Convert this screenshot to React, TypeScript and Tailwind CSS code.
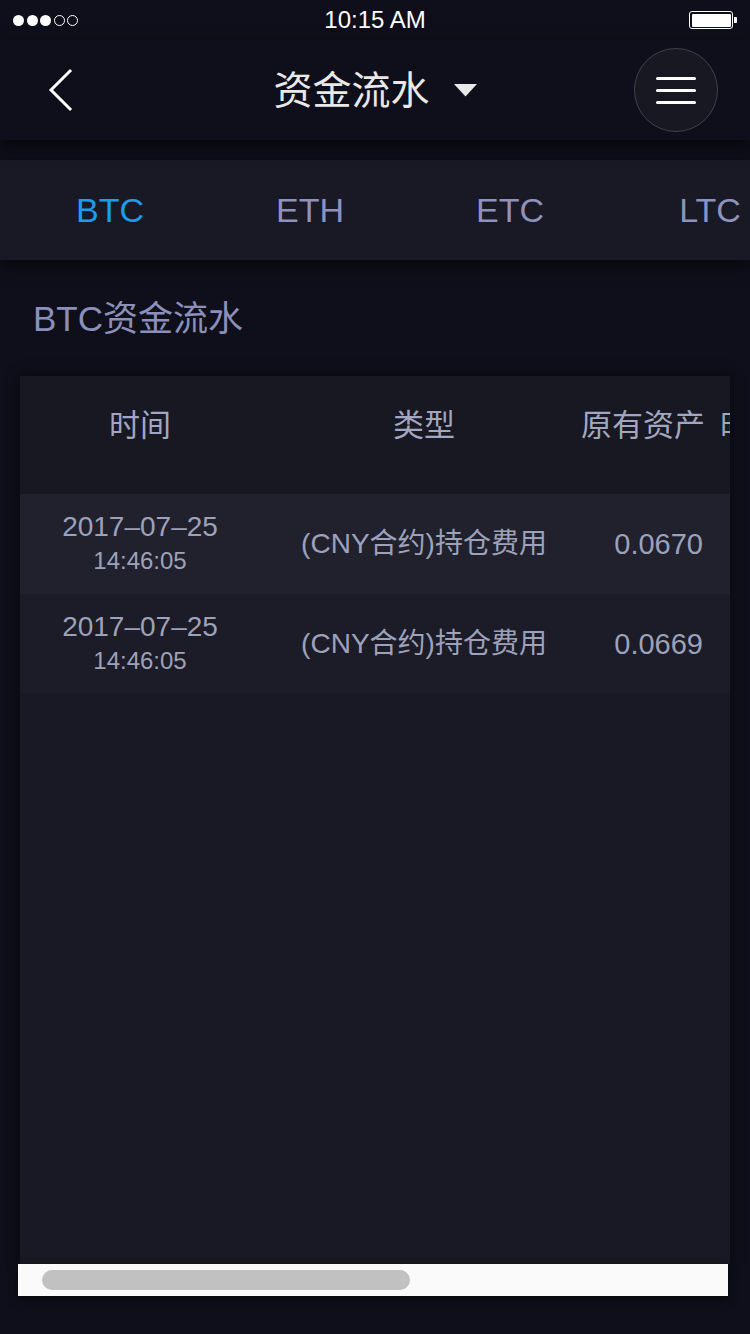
import React from "react";

const FONT = { fontFamily: '"Liberation Sans", "Noto Sans CJK SC", sans-serif' };

function StatusBar() {
  return (
    <div className="relative h-[40px] flex items-center px-[13px]">
      <div className="flex items-center gap-[2.5px]">
        {[0, 1, 2].map((i) => (
          <div key={i} className="w-[11px] h-[11px] rounded-full bg-white" />
        ))}
        {[0, 1].map((i) => (
          <div key={i} className="w-[11px] h-[11px] rounded-full border border-white" />
        ))}
      </div>
      <div className="absolute left-0 right-0 top-0 h-[40px] flex items-center justify-center text-white text-[24px] leading-none">
        10:15 AM
      </div>
      <div className="ml-auto flex items-center">
        <div className="w-[44px] h-[18px] rounded-[3px] border-[1.5px] border-white p-[1.5px]">
          <div className="w-full h-full bg-white rounded-[1px]" />
        </div>
        <div className="w-[3px] h-[6px] bg-white rounded-r-[1px] ml-[1px]" />
      </div>
    </div>
  );
}

function NavBar() {
  return (
    <div className="relative z-20 h-[100px] grid grid-cols-[1fr_auto_1fr] items-center bg-[#0e0f1a] shadow-[0_6px_14px_rgba(0,0,0,0.55)]">
      <div className="pl-[48px] flex items-center">
        <svg width="26" height="44" viewBox="0 0 26 44">
          <polyline points="22,3 3,22 22,41" fill="none" stroke="#ffffff" strokeWidth="3" strokeLinecap="square" />
        </svg>
      </div>
      <div className="flex items-center">
        <span className="text-[39px] leading-none text-[#e8e8e8]">资金流水</span>
        <svg className="ml-[24px]" width="23" height="13" viewBox="0 0 23 13">
          <polygon points="0,0 23,0 11.5,12.5" fill="#e8e8e8" />
        </svg>
      </div>
      <div className="flex justify-end pr-[32px]">
        <div className="w-[84px] h-[84px] rounded-full border border-[#40414f] bg-[#171822] flex flex-col items-center justify-center gap-[9px]">
          <div className="w-[40px] h-[3px] bg-white rounded-full" />
          <div className="w-[40px] h-[3px] bg-white rounded-full" />
          <div className="w-[40px] h-[3px] bg-white rounded-full" />
        </div>
      </div>
    </div>
  );
}

function Tabs() {
  const tabs = ["BTC", "ETH", "ETC", "LTC"];
  return (
    <div className="relative z-10 mt-[20px] h-[100px] bg-[#181924] flex items-center pl-[10px] overflow-hidden shadow-[0_6px_14px_rgba(0,0,0,0.5)]">
      {tabs.map((t, i) => (
        <div
          key={t}
          className={
            "shrink-0 w-[200px] flex justify-center text-[34px] leading-none " +
            (i === 0 ? "text-[#1b9cec]" : "text-[#8f92bd]")
          }
        >
          {t}
        </div>
      ))}
    </div>
  );
}

type Row = { date: string; time: string; type: string; amount: string };

const rows: Row[] = [
  { date: "2017–07–25", time: "14:46:05", type: "(CNY合约)持仓费用", amount: "0.0670" },
  { date: "2017–07–25", time: "14:46:05", type: "(CNY合约)持仓费用", amount: "0.0669" },
];

function Table() {
  return (
    <div className="ml-[20px] w-[710px]">
      <div className="h-[888px] bg-[#181924] overflow-hidden shadow-[0_0_12px_rgba(0,0,0,0.55)]">
        <div className="h-[118px] bg-[#171822]">
          <div className="h-[98px] flex items-center text-[31px] leading-none text-[#a3a6c0] whitespace-nowrap">
            <div className="w-[240px] shrink-0 text-center">时间</div>
            <div className="w-[314px] shrink-0 pl-[14px] text-center">类型</div>
            <div className="w-[146px] shrink-0 pl-[7px]">原有资产</div>
            <div className="shrink-0">时间</div>
          </div>
        </div>
        {rows.map((r, i) => (
          <div
            key={i}
            className={
              "h-[100px] flex items-center whitespace-nowrap text-[#9ea1ba] " +
              (i === 0 ? "bg-[#20212d]" : "bg-[#1b1c27]")
            }
          >
            <div className="w-[240px] shrink-0 flex flex-col items-center gap-[4px]">
              <div className="text-[28px] leading-[30px]">{r.date}</div>
              <div className="text-[24px] leading-[30px]">{r.time}</div>
            </div>
            <div className="w-[314px] shrink-0 pl-[14px] text-center text-[28px] leading-none">{r.type}</div>
            <div className="w-[146px] shrink-0 pr-[17px] text-right text-[29px] leading-none">{r.amount}</div>
          </div>
        ))}
      </div>
      <div className="-ml-[2px] w-[710px] h-[32px] bg-[#fafafa] pl-[24px] pt-[6px] shadow-[0_4px_10px_rgba(0,0,0,0.5)]">
        <div className="w-[368px] h-[20px] rounded-full bg-[#c1c1c1]" />
      </div>
    </div>
  );
}

export default function App() {
  return (
    <div className="w-[750px] h-[1334px] bg-[#0e0f1a] overflow-hidden" style={FONT}>
      <StatusBar />
      <NavBar />
      <Tabs />
      <div className="h-[116px] flex items-center pl-[33px] text-[35px] leading-none text-[#8c8fba]">
        BTC资金流水
      </div>
      <Table />
    </div>
  );
}
